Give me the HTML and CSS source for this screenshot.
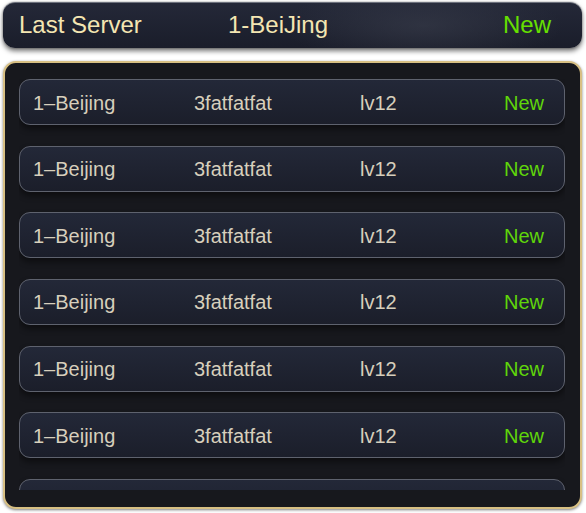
FILE: index.html
```html
<!DOCTYPE html>
<html>
<head>
<meta charset="utf-8">
<link rel="stylesheet" href="styles.css">
</head>
<body>
<div class="screen">
  <div class="last-bar">
    <span class="last-label">Last Server</span>
    <span class="last-name">1-BeiJing</span>
    <span class="last-new">New</span>
  </div>
  <div class="panel">
    <div class="list">
      <div class="row"><span class="c-name">1–Beijing</span><span class="c-role">3fatfatfat</span><span class="c-lv">lv12</span><span class="c-new">New</span></div>
      <div class="row"><span class="c-name">1–Beijing</span><span class="c-role">3fatfatfat</span><span class="c-lv">lv12</span><span class="c-new">New</span></div>
      <div class="row"><span class="c-name">1–Beijing</span><span class="c-role">3fatfatfat</span><span class="c-lv">lv12</span><span class="c-new">New</span></div>
      <div class="row"><span class="c-name">1–Beijing</span><span class="c-role">3fatfatfat</span><span class="c-lv">lv12</span><span class="c-new">New</span></div>
      <div class="row"><span class="c-name">1–Beijing</span><span class="c-role">3fatfatfat</span><span class="c-lv">lv12</span><span class="c-new">New</span></div>
      <div class="row"><span class="c-name">1–Beijing</span><span class="c-role">3fatfatfat</span><span class="c-lv">lv12</span><span class="c-new">New</span></div>
      <div class="row"></div>
    </div>
  </div>
</div>
</body>
</html>
```
FILE: styles.css
```css
html, body {
  margin: 0;
  padding: 0;
  background: #ffffff;
}
body {
  font-family: "Liberation Sans", Arial, sans-serif;
  width: 586px;
  height: 513px;
  overflow: hidden;
}
.screen {
  padding: 2px 4px 0 3px;
  display: flex;
  flex-direction: column;
}
.last-bar {
  height: 46px;
  box-sizing: border-box;
  border-radius: 12px;
  border-top: 1px solid #6c707c;
  background:
    radial-gradient(ellipse 140px 40px at 420px 50%, rgba(60,64,78,0.55), rgba(60,64,78,0) 100%),
    linear-gradient(#242838, #1a1d2a);
  box-shadow: 0 3px 5px rgba(0,0,0,0.55), 0 0 2px rgba(0,0,0,0.4);
  display: flex;
  align-items: center;
  padding: 0 31px 1px 16px;
  font-size: 24px;
}
.last-label {
  color: #f4e6b2;
  width: 209px;
}
.last-name {
  color: #f4e6b2;
  flex: 1;
}
.last-new {
  color: #66e000;
}
.panel {
  margin-top: 13px;
  height: 448px;
  box-sizing: border-box;
  border: 2px solid #d8c083;
  border-radius: 13px;
  background: #17181d;
  box-shadow: 0 1px 3px rgba(0,0,0,0.5);
  padding: 16px 15px 0 14px;
  overflow: hidden;
}
.list {
  height: 411px;
  overflow: hidden;
  display: flex;
  flex-direction: column;
  gap: 20.67px;
}
.row {
  flex: none;
  height: 46px;
  box-sizing: border-box;
  border: 1px solid #5e626e;
  border-radius: 11px;
  background: linear-gradient(#232838, #1b1e2a);
  box-shadow: 0 4px 6px rgba(0,0,0,0.45);
  display: flex;
  align-items: center;
  padding: 2px 20px 0 13px;
  font-size: 20px;
  color: #d7cfbc;
}
.c-name { width: 161px; }
.c-role { width: 166px; }
.c-lv { flex: 1; }
.c-new { color: #5fd60a; }
```
